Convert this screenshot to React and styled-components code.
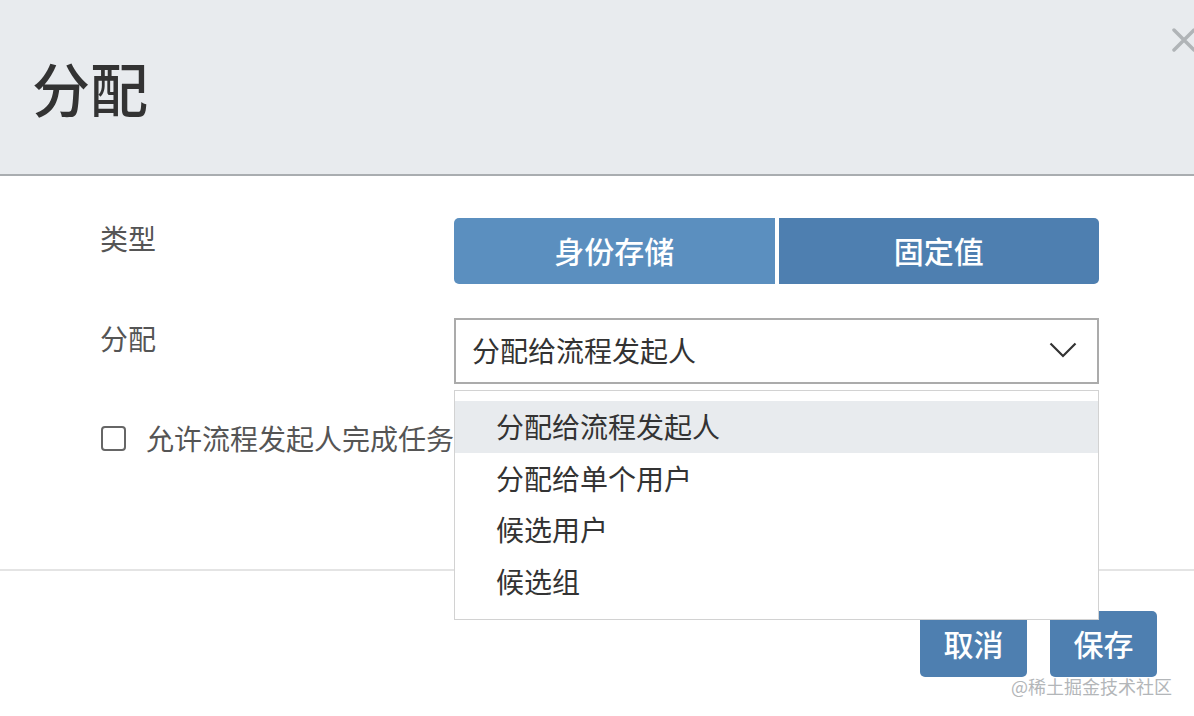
import React from 'react'
import styled, { createGlobalStyle } from 'styled-components'

const GlobalStyle = createGlobalStyle`
  * { box-sizing: border-box; }
  body {
    margin: 0;
    background: #fff;
    font-family: "Noto Sans CJK SC", "Noto Sans", sans-serif;
  }
`

const Modal = styled.div`
  position: relative;
  width: 1194px;
  height: 716px;
  overflow: hidden;
  background: #fff;
`

const Header = styled.div`
  position: relative;
  height: 176px;
  background: #e8ebee;
  border-bottom: 2px solid #a9adb0;
  display: flex;
  align-items: center;
  padding-left: 32px;
`

const Title = styled.h1`
  margin: 0;
  font-size: 58px;
  font-weight: 500;
  color: #333;
  line-height: 1;
`

const Close = styled.button`
  position: absolute;
  top: 28px;
  right: -2px;
  width: 24px;
  height: 24px;
  padding: 0;
  border: none;
  background: none;
  cursor: pointer;
`

const Body = styled.div`
  height: 393px;
  padding: 42px 0 0 100px;
`

const Row = styled.div`
  display: grid;
  grid-template-columns: 354px 645px;
  margin-bottom: ${(p) => p.gap || 34}px;
`

const Label = styled.div`
  font-size: 28px;
  line-height: 40px;
  color: #555;
`

const Segmented = styled.div`
  display: flex;
  gap: 4px;
  height: 66px;
`

const Segment = styled.button`
  flex: 1;
  border: none;
  padding: 0 0 3px;
  color: #fff;
  font-family: inherit;
  font-size: 30px;
  font-weight: 500;
  background: ${(p) => (p.active ? '#5b8fbf' : '#4e7fb0')};
  border-radius: ${(p) => (p.first ? '5px 0 0 5px' : '0 5px 5px 0')};
  cursor: pointer;
`

const SelectWrap = styled.div`
  position: relative;
`

const SelectBox = styled.div`
  height: 66px;
  border: 2px solid #ababab;
  display: flex;
  align-items: center;
  justify-content: space-between;
  padding: 0 20px 2px 16px;
  font-size: 28px;
  color: #333;
  background: #fff;
`

const Menu = styled.ul`
  position: absolute;
  left: 0;
  top: calc(100% + 6px);
  width: 645px;
  margin: 0;
  padding: 10px 0 12px;
  list-style: none;
  background: #fff;
  border: 1px solid #d2d2d2;
  z-index: 5;
`

const Option = styled.li`
  height: 51.5px;
  line-height: 50px;
  padding-left: 41px;
  font-size: 28px;
  color: #333;
  background: ${(p) => (p.selected ? '#e8ebee' : 'transparent')};
`

const CheckRow = styled.label`
  display: flex;
  align-items: center;
  gap: 20px;
  height: 40px;
  margin-top: 32px;
  padding-left: 1px;
  font-size: 28px;
  color: #555;
`

const Checkbox = styled.span`
  width: 25px;
  height: 25px;
  border: 2px solid #666;
  border-radius: 4px;
  background: #fff;
`

const Footer = styled.div`
  border-top: 2px solid #e4e4e4;
  display: flex;
  justify-content: flex-end;
  gap: 23px;
  padding: 40px 37px 0 0;
`

const FooterButton = styled.button`
  width: 107px;
  height: 66px;
  border: none;
  border-radius: 5px;
  padding: 0 0 3px;
  background: #4e7fb0;
  color: #fff;
  font-family: inherit;
  font-size: 30px;
  font-weight: 500;
  cursor: pointer;
`

const Watermark = styled.div`
  position: absolute;
  right: 22px;
  bottom: 19px;
  font-size: 18px;
  line-height: 22px;
  color: #b3b6b9;
  z-index: 6;
`

const options = ['分配给流程发起人', '分配给单个用户', '候选用户', '候选组']

const App = () => {
  return (
    <>
      <GlobalStyle />
      <Modal>
        <Header>
          <Title>分配</Title>
          <Close aria-label="关闭">
            <svg width="24" height="24" viewBox="0 0 24 24">
              <path d="M2 2 L22 22 M22 2 L2 22" stroke="#b0b4b7" strokeWidth="3.5" strokeLinecap="round" />
            </svg>
          </Close>
        </Header>
        <Body>
          <Row>
            <Label>类型</Label>
            <Segmented>
              <Segment first active>身份存储</Segment>
              <Segment>固定值</Segment>
            </Segmented>
          </Row>
          <Row gap={0}>
            <Label>分配</Label>
            <SelectWrap>
              <SelectBox>
                <span>分配给流程发起人</span>
                <svg width="28" height="16" viewBox="0 0 28 16">
                  <path d="M1.5 1.5 L14 14 L26.5 1.5" fill="none" stroke="#333" strokeWidth="2.2" />
                </svg>
              </SelectBox>
              <Menu>
                {options.map((o, i) => (
                  <Option key={o} selected={i === 0}>{o}</Option>
                ))}
              </Menu>
            </SelectWrap>
          </Row>
          <CheckRow>
            <Checkbox />
            允许流程发起人完成任务
          </CheckRow>
        </Body>
        <Footer>
          <FooterButton>取消</FooterButton>
          <FooterButton>保存</FooterButton>
        </Footer>
        <Watermark>@稀土掘金技术社区</Watermark>
      </Modal>
    </>
  )
}

export default App
